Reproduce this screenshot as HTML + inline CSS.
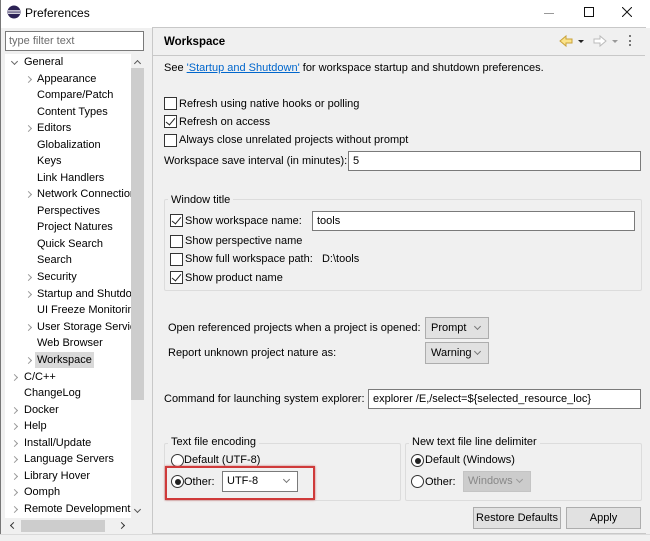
<!DOCTYPE html>
<html><head><meta charset="utf-8"><style>
*{box-sizing:border-box;margin:0;padding:0}
body{width:650px;height:541px;overflow:hidden;background:#f0f0f0;font-family:"Liberation Sans","Noto Sans CJK SC",sans-serif;font-size:11px;color:#000;position:relative}
.a{position:absolute;white-space:nowrap;line-height:14px}
.cb{position:absolute;width:13px;height:13px;border:1px solid #333;background:#fff}
.cb.c::after{content:"";position:absolute;left:3px;top:0px;width:4px;height:8px;border:solid #222;border-width:0 1.3px 1.3px 0;transform:rotate(40deg)}
.rb{position:absolute;width:13px;height:13px;border:1px solid #333;border-radius:50%;background:#fff}
.rb.c::after{content:"";position:absolute;left:2.5px;top:2.5px;width:6px;height:6px;border-radius:50%;background:#222}
.in{position:absolute;height:20px;border:1px solid #7a7a7a;background:#fff;padding-left:4px;line-height:18px}
.dd{position:absolute;height:22px;border:1px solid #adadad;background:#e1e1e1;padding-left:5px;line-height:20px}
.ar{position:absolute;width:5px;height:5px;border:solid #777;border-width:0 1px 1px 0;transform:rotate(45deg)}
.chev{position:absolute;width:5px;height:5px;border:solid #999;border-width:1px 1px 0 0;transform:rotate(45deg)}
.grp{position:absolute;border:1px solid #dcdcdc;border-radius:2px}
.btn{position:absolute;height:22px;border:1px solid #adadad;background:#e1e1e1;text-align:center;line-height:20px}
</style></head><body>
<div style="position:absolute;left:0;top:0;width:650px;height:28px;background:#fff"></div>
<div style="position:absolute;left:0;top:0;width:1px;height:541px;background:#777"></div>
<svg style="position:absolute;left:7px;top:5px" width="14" height="14"><circle cx="7" cy="7" r="6.5" fill="#2c2255"/><rect x="1" y="5.3" width="12" height="1.2" fill="#fff"/><rect x="1" y="7.6" width="12" height="1.2" fill="#fff"/></svg>
<div class="a" style="left:25px;top:6px;font-size:12px">Preferences</div>
<div style="position:absolute;left:544px;top:13px;width:10px;height:1px;background:#999"></div>
<div style="position:absolute;left:584px;top:7px;width:10px;height:10px;border:1px solid #111"></div>
<svg style="position:absolute;left:622px;top:7px" width="10" height="10"><path d="M0 0L10 10M10 0L0 10" stroke="#111" stroke-width="1"/></svg>

<!-- left pane -->
<div style="position:absolute;left:5px;top:31px;width:139px;height:20px;border:1px solid #7a7a7a;background:#fff"></div>
<div class="a" style="left:9px;top:34px;color:#6d6d6d">type filter text</div>
<div style="position:absolute;left:5px;top:54px;width:139px;height:479px;background:#fff"></div>
<div style="position:absolute;left:131px;top:54px;width:13px;height:464px;background:#f0f0f0"></div>
<div style="position:absolute;left:131px;top:68px;width:13px;height:332px;background:#cdcdcd"></div>
<div class="chev" style="left:135px;top:61px;transform:rotate(-45deg);border-color:#555"></div>
<div class="chev" style="left:135px;top:507px;transform:rotate(135deg);border-color:#555"></div>
<div style="position:absolute;left:5px;top:518px;width:139px;height:15px;background:#f0f0f0"></div>
<div style="position:absolute;left:21px;top:520px;width:84px;height:12px;background:#cdcdcd"></div>
<div class="chev" style="left:11px;top:523px;transform:rotate(-135deg);border-color:#333"></div>
<div class="chev" style="left:119px;top:523px;border-color:#333"></div>
<div style="position:absolute;left:35px;top:352px;width:59px;height:16px;background:#d9d9d9"></div>

<div class="chev" style="left:12px;top:59px;transform:rotate(135deg);border-color:#666"></div>
<div class="a" style="left:24px;top:55px">General</div>
<div class="chev" style="left:26px;top:77px"></div><div class="a" style="left:37px;top:72px">Appearance</div>
<div class="a" style="left:37px;top:88px">Compare/Patch</div>
<div class="a" style="left:37px;top:105px">Content Types</div>
<div class="chev" style="left:26px;top:126px"></div><div class="a" style="left:37px;top:121px">Editors</div>
<div class="a" style="left:37px;top:138px">Globalization</div>
<div class="a" style="left:37px;top:154px">Keys</div>
<div class="a" style="left:37px;top:171px">Link Handlers</div>
<div class="chev" style="left:26px;top:192px"></div><div class="a" style="left:37px;top:187px;width:94px;overflow:hidden">Network Connections</div>
<div class="a" style="left:37px;top:204px">Perspectives</div>
<div class="a" style="left:37px;top:220px">Project Natures</div>
<div class="a" style="left:37px;top:237px">Quick Search</div>
<div class="a" style="left:37px;top:253px">Search</div>
<div class="chev" style="left:26px;top:275px"></div><div class="a" style="left:37px;top:270px">Security</div>
<div class="chev" style="left:26px;top:292px"></div><div class="a" style="left:37px;top:287px;width:94px;overflow:hidden">Startup and Shutdown</div>
<div class="a" style="left:37px;top:303px;width:94px;overflow:hidden">UI Freeze Monitoring</div>
<div class="chev" style="left:26px;top:325px"></div><div class="a" style="left:37px;top:320px;width:94px;overflow:hidden">User Storage Service</div>
<div class="a" style="left:37px;top:336px">Web Browser</div>
<div class="chev" style="left:26px;top:358px"></div><div class="a" style="left:37px;top:353px">Workspace</div>
<div class="chev" style="left:12px;top:375px"></div><div class="a" style="left:24px;top:370px">C/C++</div>
<div class="a" style="left:24px;top:386px">ChangeLog</div>
<div class="chev" style="left:12px;top:408px"></div><div class="a" style="left:24px;top:403px">Docker</div>
<div class="chev" style="left:12px;top:424px"></div><div class="a" style="left:24px;top:419px">Help</div>
<div class="chev" style="left:12px;top:441px"></div><div class="a" style="left:24px;top:436px">Install/Update</div>
<div class="chev" style="left:12px;top:457px"></div><div class="a" style="left:24px;top:452px">Language Servers</div>
<div class="chev" style="left:12px;top:474px"></div><div class="a" style="left:24px;top:469px">Library Hover</div>
<div class="chev" style="left:12px;top:490px"></div><div class="a" style="left:24px;top:485px">Oomph</div>
<div class="chev" style="left:12px;top:507px"></div><div class="a" style="left:24px;top:502px">Remote Development</div>

<!-- right pane -->
<div style="position:absolute;left:152px;top:27px;width:494px;height:507px;border:1px solid #c8c8c8;border-right:none"></div>
<div style="position:absolute;left:153px;top:55px;width:492px;height:1px;background:#c8c8c8"></div>
<div class="a" style="left:164px;top:35px;font-weight:bold;font-size:11.5px">Workspace</div>
<svg style="position:absolute;left:558px;top:34px" width="64" height="14">
<path d="M2 7 L8 2 L8 5 L14 5 L14 9 L8 9 L8 12 Z" fill="#fbe38a" stroke="#c9a23a"/>
<path d="M20 6 L26 6 L23 9 Z" fill="#222"/>
<path d="M48 7 L42 2 L42 5 L36 5 L36 9 L42 9 L42 12 Z" fill="#fff" stroke="#bbb"/>
<path d="M54 6 L60 6 L57 9 Z" fill="#999"/>
</svg>
<div style="position:absolute;left:629px;top:35px;width:3px;height:11px;border-left:2px dotted #777"></div>
<div class="a" style="left:164px;top:61px">See <span style="color:#0066cc;text-decoration:underline">'Startup and Shutdown'</span> for workspace startup and shutdown preferences.</div>

<div class="cb" style="left:164px;top:97px"></div><div class="a" style="left:179px;top:97px">Refresh using native hooks or polling</div>
<div class="cb c" style="left:164px;top:115px"></div><div class="a" style="left:179px;top:115px">Refresh on access</div>
<div class="cb" style="left:164px;top:134px"></div><div class="a" style="left:179px;top:133px">Always close unrelated projects without prompt</div>
<div class="a" style="left:164px;top:154px">Workspace save interval (in minutes):</div>
<div class="in" style="left:348px;top:151px;width:293px">5</div>

<div class="grp" style="left:164px;top:199px;width:478px;height:92px"></div>
<div class="a" style="left:168px;top:193px;background:#f0f0f0;padding:0 3px">Window title</div>
<div class="cb c" style="left:170px;top:214px"></div><div class="a" style="left:185px;top:214px">Show workspace name:</div>
<div class="in" style="left:312px;top:211px;width:323px">tools</div>
<div class="cb" style="left:170px;top:235px"></div><div class="a" style="left:185px;top:234px">Show perspective name</div>
<div class="cb" style="left:170px;top:253px"></div><div class="a" style="left:185px;top:252px">Show full workspace path:&nbsp;&nbsp;&nbsp;D:\tools</div>
<div class="cb c" style="left:170px;top:271px"></div><div class="a" style="left:185px;top:271px">Show product name</div>

<div class="a" style="left:168px;top:321px">Open referenced projects when a project is opened:</div>
<div class="dd" style="left:425px;top:317px;width:64px">Prompt<div class="ar" style="right:8px;top:6px"></div></div>
<div class="a" style="left:168px;top:346px">Report unknown project nature as:</div>
<div class="dd" style="left:425px;top:342px;width:64px">Warning<div class="ar" style="right:8px;top:6px"></div></div>

<div class="a" style="left:164px;top:392px">Command for launching system explorer:</div>
<div class="in" style="left:368px;top:389px;width:273px">explorer /E,/select=${selected_resource_loc}</div>

<div class="grp" style="left:164px;top:443px;width:237px;height:58px"></div>
<div class="a" style="left:168px;top:435px;background:#f0f0f0;padding:0 3px">Text file encoding</div>
<div class="rb" style="left:171px;top:454px"></div><div class="a" style="left:184px;top:453px">Default (UTF-8)</div>
<div class="rb c" style="left:171px;top:475px"></div><div class="a" style="left:184px;top:475px">Other:</div>
<div class="in" style="left:222px;top:471px;width:76px;height:21px">UTF-8<div class="ar" style="right:8px;top:5px"></div></div>
<div style="position:absolute;left:165px;top:466px;width:150px;height:34px;border:2px solid #cf3a3a;box-shadow:0 0 2px #c66"></div>

<div class="grp" style="left:405px;top:443px;width:237px;height:58px"></div>
<div class="a" style="left:409px;top:435px;background:#f0f0f0;padding:0 3px">New text file line delimiter</div>
<div class="rb c" style="left:411px;top:454px"></div><div class="a" style="left:425px;top:453px">Default (Windows)</div>
<div class="rb" style="left:411px;top:475px"></div><div class="a" style="left:425px;top:475px">Other:</div>
<div style="position:absolute;left:463px;top:471px;width:68px;height:21px;background:#cccccc;border:1px solid #c4c4c4;color:#888;padding-left:4px;line-height:19px">Windows<div class="ar" style="right:8px;top:5px;border-color:#999"></div></div>

<div class="btn" style="left:473px;top:507px;width:88px">Restore Defaults</div>
<div class="btn" style="left:566px;top:507px;width:75px">Apply</div>
<div style="position:absolute;left:0;top:534px;width:650px;height:7px;background:#f0f0f0;border-top:1px solid #dadada"></div>
</body></html>
